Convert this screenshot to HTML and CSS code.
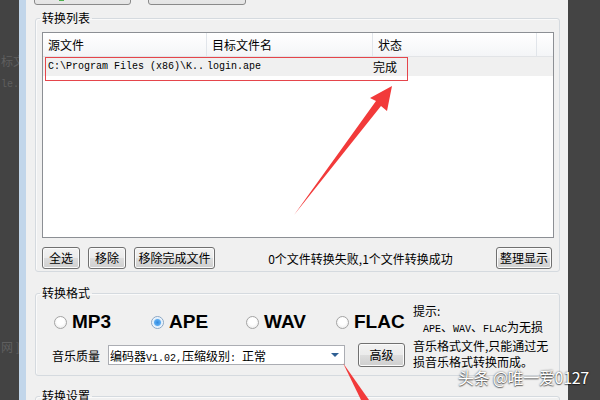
FILE: index.html
```html
<!DOCTYPE html>
<html lang="zh-CN">
<head>
    <meta charset="UTF-8">
    <meta name="viewport" content="width=device-width, initial-scale=1.0">
    <title>音频格式转换</title>
    <link rel="stylesheet" href="styles.css">
</head>
<body>
    <div class="screen">
        <!-- 背后窗口的残影 -->
        <div class="bg-left">
            <span class="ghost g1">标文</span>
            <span class="ghost g2">le.</span>
            <span class="ghost g3">网 ]</span>
        </div>
        <div class="frame-edge"></div>

        <main class="window">
            <div class="toolbar">
                <div class="tb-btn"><span class="tb-icon"></span></div>
                <div class="tb-btn"></div>
            </div>

            <fieldset class="group group-list">
                <legend>转换列表</legend>
                <div class="listview">
                    <div class="lv-head">
                        <div class="col c1">源文件</div>
                        <div class="col c2">目标文件名</div>
                        <div class="col c3">状态</div>
                        <div class="col c4"></div>
                    </div>
                    <div class="lv-row">
                        <div class="cell c1 mono">C:\Program Files (x86)\K..</div>
                        <div class="cell c2 mono">login.ape</div>
                        <div class="cell c3">完成</div>
                    </div>
                </div>
                <div class="list-actions">
                    <button class="btn w-38">全选</button>
                    <button class="btn w-38">移除</button>
                    <button class="btn w-81">移除完成文件</button>
                    <span class="status">0个文件转换失败,1个文件转换成功</span>
                    <button class="btn w-56 tidy">整理显示</button>
                </div>
            </fieldset>

            <fieldset class="group group-format">
                <legend>转换格式</legend>
                <div class="format-body">
                    <div class="format-left">
                        <div class="radio-row">
                            <label class="opt"><span class="radio"></span>MP3</label>
                            <label class="opt"><span class="radio on"></span>APE</label>
                            <label class="opt"><span class="radio"></span>WAV</label>
                            <label class="opt"><span class="radio"></span>FLAC</label>
                        </div>
                        <div class="quality-row">
                            <span class="q-label">音乐质量</span>
                            <div class="combo">
                                <span>编码器<span class="mono">V1.02,</span>压缩级别<span class="mono">: </span>正常</span>
                                <span class="combo-arrow"></span>
                            </div>
                            <button class="btn adv">高级</button>
                        </div>
                    </div>
                    <p class="hint">
                        提示:<br>
                        <span class="indent"><span class="mono">APE</span>、<span class="mono">WAV</span>、<span class="mono">FLAC</span>为无损</span><br>
                        音乐格式文件,只能通过无<br>
                        损音乐格式转换而成。
                    </p>
                </div>
            </fieldset>

            <fieldset class="group group-settings">
                <legend>转换设置</legend>
            </fieldset>
        </main>

        <div class="bg-right"></div>

        <!-- 标注：红框和箭头 -->
        <svg class="marks" width="600" height="400" viewBox="0 0 600 400">
            <rect x="45.5" y="57.5" width="362" height="23" fill="none" stroke="#e5454b" stroke-width="1"/>
            <polygon points="392,86 387,111 381,106 294,215 376,101 370,98" fill="#f23a3a"/>
            <polygon points="343,363 369,400 361,400" fill="#f23a3a"/>
        </svg>

        <div class="watermark">头条 @唯一爱0127</div>
    </div>
</body>
</html>
```

FILE: styles.css
```css
body {
    margin: 0;
    font-family: "Noto Sans CJK SC", "Liberation Sans", sans-serif;
    font-size: 12px;
    color: #000;
    background: #444;
}

.screen {
    position: relative;
    display: flex;
    width: 600px;
    height: 400px;
    overflow: hidden;
}

.bg-left {
    width: 19px;
    flex: none;
    background: #434343;
    display: flex;
    flex-direction: column;
    padding-top: 54px;
    box-sizing: border-box;
    overflow: hidden;
}

.ghost {
    color: #5f5f5f;
    line-height: 14px;
    white-space: nowrap;
    padding-left: 1px;
}

.g2 { margin-top: 10px; font-family: "Liberation Mono", monospace; font-size: 10px; }
.g3 { margin-top: 248px; }

.frame-edge {
    width: 7px;
    flex: none;
    background: #c2d6ea;
}

.bg-right {
    width: 32px;
    flex: none;
    background: #444;
}

.window {
    width: 542px;
    flex: none;
    background: #f0f0f0;
    overflow: hidden;
}

.mono {
    font-family: "Liberation Mono", monospace;
    font-size: 10px;
}

/* 顶部被截掉的按钮 */
.toolbar {
    height: 5px;
    overflow: hidden;
    display: flex;
    align-items: flex-end;
    gap: 17px;
    padding-left: 8px;
}

.tb-btn {
    width: 97px;
    height: 22px;
    flex: none;
    box-sizing: border-box;
    border: 1px solid #8a8a8a;
    border-radius: 3px;
    background: linear-gradient(#f2f2f2, #e4e4e4);
    display: flex;
    align-items: flex-end;
    padding-bottom: 3px;
}

.tb-btn + .tb-btn { width: 98px; }

.tb-icon {
    width: 5px;
    height: 16px;
    margin-left: 24px;
    background: #4bb04b;
}

/* 分组框 */
.group {
    margin: 6px 8px 0 9px;
    padding: 7px 5px 2px 6px;
    border: 1px solid #d5dadf;
    border-radius: 3px;
    box-shadow: inset 1px 1px 0 #fafafa;
    min-width: 0;
}

.group legend {
    padding: 0 2px;
    margin-left: -2px;
    line-height: 14px;
}

.listview {
    height: 206px;
    box-sizing: border-box;
    border: 1px solid #8c8f94;
    background: #fff;
}

.lv-head {
    display: flex;
    height: 24px;
    box-sizing: border-box;
    border-bottom: 1px solid #e2e4e7;
    background: linear-gradient(#ffffff, #f4f5f7);
}

.col {
    height: 23px;
    line-height: 23px;
    padding-left: 5px;
    box-sizing: border-box;
    border-right: 1px solid #e1e5ea;
}

.c1 { width: 164px; }
.c2 { width: 166px; }
.c3 { width: 164px; }
.c4 { flex: 1; border-right: 0; }

.lv-row {
    display: flex;
    height: 19px;
    line-height: 19px;
    background: #f0f0f0;
}

.cell {
    box-sizing: border-box;
    white-space: nowrap;
}

.lv-row .c1 { padding-left: 5px; }

.list-actions {
    display: flex;
    align-items: center;
    gap: 8px;
    margin-top: 9px;
    height: 22px;
}

.btn {
    height: 22px;
    padding: 0;
    box-sizing: border-box;
    border: 1px solid #707070;
    border-radius: 3px;
    background: linear-gradient(#f2f2f2 0%, #ebebeb 50%, #dddddd 51%, #cfcfcf 100%);
    box-shadow: inset 0 0 0 1px #fbfbfb;
    font: inherit;
    color: #000;
    line-height: 20px;
}

.w-38 { width: 38px; }
.w-56 { width: 56px; }
.w-81 { width: 81px; }

.status {
    flex: 1;
    text-align: center;
    padding-left: 10px;
    white-space: nowrap;
}

.tidy { margin-right: 2px; }

/* 转换格式 */
.group-format {
    margin-top: 14px;
    padding: 3px 5px 5px 6px;
}

.format-body {
    display: flex;
}

.format-left {
    width: 367px;
    flex: none;
}

.radio-row {
    display: grid;
    grid-template-columns: 97px 95px 90px auto;
    align-items: center;
    height: 24px;
    margin-top: 7px;
    padding-left: 12px;
}

.opt {
    display: flex;
    align-items: center;
    gap: 5px;
    font-family: "Liberation Sans", Arial, sans-serif;
    font-weight: bold;
    font-size: 19px;
    line-height: 24px;
}

.radio {
    width: 13px;
    height: 13px;
    flex: none;
    box-sizing: border-box;
    border-radius: 50%;
    border: 1px solid #a4a4a4;
    background: radial-gradient(circle at 50% 40%, #ffffff 40%, #e4e4e4 100%);
}

.radio.on {
    border-color: #8aa6c4;
    background: radial-gradient(circle, #2f8ae0 0, #5aaaf0 3px, #dcecfb 4px, #ffffff 6px);
}

.quality-row {
    display: flex;
    align-items: center;
    height: 24px;
    margin-top: 9px;
    padding-left: 10px;
}

.q-label {
    width: 48px;
    flex: none;
}

.combo {
    width: 237px;
    height: 20px;
    margin-left: 8px;
    box-sizing: border-box;
    border: 1px solid #abadb3;
    background: #fff;
    display: flex;
    align-items: center;
    padding-left: 1px;
    white-space: nowrap;
}

.combo-arrow {
    margin-left: auto;
    margin-right: 5px;
    width: 0;
    height: 0;
    border-left: 4px solid transparent;
    border-right: 4px solid transparent;
    border-top: 4px solid #2f5f93;
}

.adv {
    width: 47px;
    height: 24px;
    margin-left: 13px;
}

.hint {
    margin: 0 0 0 4px;
    line-height: 16px;
    white-space: nowrap;
}

.indent { padding-left: 10px; }

.group-settings {
    margin-top: 13px;
    height: 60px;
}

/* 标注层 */
.marks {
    position: absolute;
    left: 0;
    top: 0;
    pointer-events: none;
}

.watermark {
    position: absolute;
    left: 458px;
    top: 369px;
    font-size: 16px;
    line-height: 17px;
    letter-spacing: -0.3px;
    color: #ffffff;
    text-shadow: 0 0 2px rgba(0, 0, 0, 0.7), 0 1px 1px rgba(0, 0, 0, 0.5);
    white-space: nowrap;
}
```
